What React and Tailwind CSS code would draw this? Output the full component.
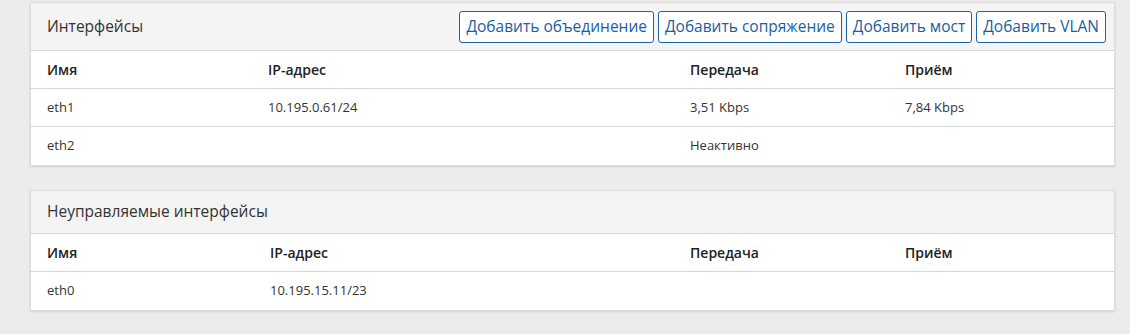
import React from 'react';

const font = { fontFamily: '"Open Sans", "Liberation Sans", sans-serif' };

const buttons = ['Добавить объединение', 'Добавить сопряжение', 'Добавить мост', 'Добавить VLAN'];

const managed = [
    { name: 'eth1', ip: '10.195.0.61/24', tx: '3,51 Kbps', rx: '7,84 Kbps' },
    { name: 'eth2', ip: '', tx: 'Неактивно', rx: '' },
];

const unmanaged = [{ name: 'eth0', ip: '10.195.15.11/23', tx: '', rx: '' }];

const Row = ({ cols, cells, head, last }) => (
    <div
        className={`grid ${cols} items-center h-[38px] px-4 ${last ? '' : 'border-b border-[#d6d6d6]'} ${
            head ? 'text-[14px] font-semibold text-[#222]' : 'text-[13px] text-[#333]'
        }`}
    >
        {cells.map((c, i) => (
            <div key={i} className="truncate">{c}</div>
        ))}
    </div>
);

const Card = ({ title, actions, cols, rows, headerH }) => (
    <div className="bg-white border border-[#dcdcdc] shadow-[0_1px_2px_rgba(0,0,0,0.12)]">
        <div className={`flex items-center justify-between ${headerH} pl-4 pr-2 bg-[#f4f4f4] border-b border-[#d6d6d6]`}>
            <h2 className="text-[15.5px] text-[#333] font-normal">{title}</h2>
            {actions && (
                <div className="flex gap-[4px]">
                    {actions.map((b) => (
                        <button
                            key={b}
                            className="h-8 px-[6px] border border-[#1b62a8] rounded-[3px] bg-white text-[15.5px] text-[#1b5e9f] whitespace-nowrap"
                        >
                            {b}
                        </button>
                    ))}
                </div>
            )}
        </div>
        <Row cols={cols} head cells={['Имя', 'IP-адрес', 'Передача', 'Приём']} />
        {rows.map((r, i) => (
            <Row key={r.name} cols={cols} last={i === rows.length - 1} cells={[r.name, r.ip, r.tx, r.rx]} />
        ))}
    </div>
);

export default function App() {
    return (
        <div className="min-h-[334px] bg-[#ececec] pl-[30px] pr-[15px] pt-[2px] pb-6 flex flex-col gap-6" style={font}>
            <Card
                title="Интерфейсы"
                actions={buttons}
                headerH="h-[48px]"
                cols="grid-cols-[221px_422px_215px_1fr]"
                rows={managed}
            />
            <Card
                title="Неуправляемые интерфейсы"
                headerH="h-[43px]"
                cols="grid-cols-[223px_420px_215px_1fr]"
                rows={unmanaged}
            />
        </div>
    );
}
